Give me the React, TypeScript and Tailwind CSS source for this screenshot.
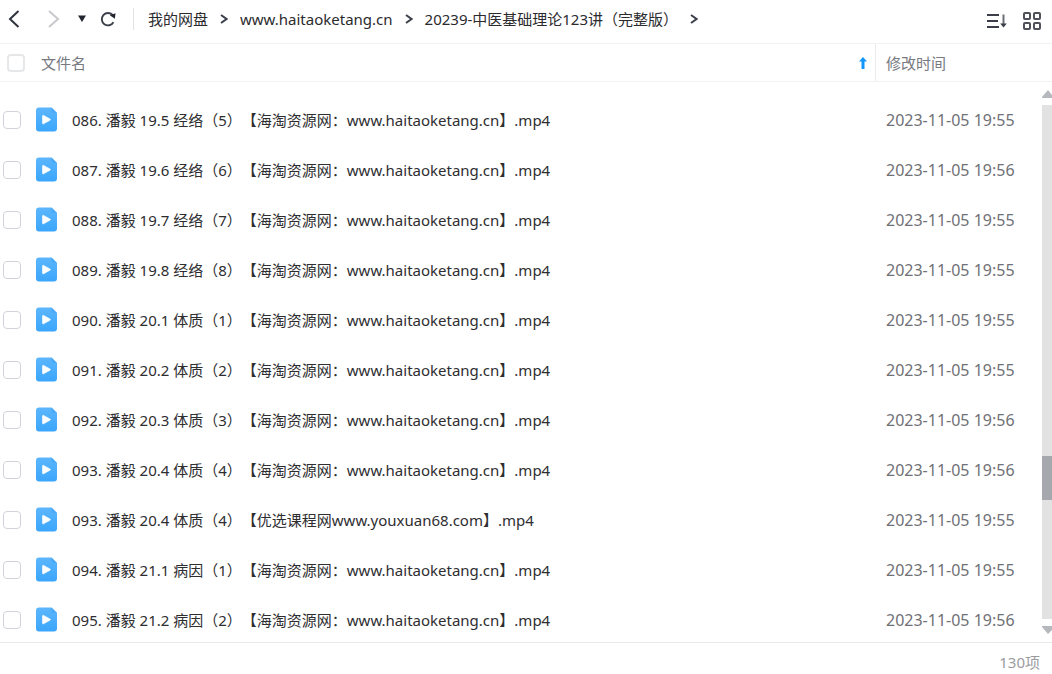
import React, { useState } from 'react';

type FileItem = {
  name: string;
  time: string;
};

const files: FileItem[] = [
  { name: '086. 潘毅 19.5 经络（5）【海淘资源网：www.haitaoketang.cn】.mp4', time: '2023-11-05 19:55' },
  { name: '087. 潘毅 19.6 经络（6）【海淘资源网：www.haitaoketang.cn】.mp4', time: '2023-11-05 19:56' },
  { name: '088. 潘毅 19.7 经络（7）【海淘资源网：www.haitaoketang.cn】.mp4', time: '2023-11-05 19:55' },
  { name: '089. 潘毅 19.8 经络（8）【海淘资源网：www.haitaoketang.cn】.mp4', time: '2023-11-05 19:55' },
  { name: '090. 潘毅 20.1 体质（1）【海淘资源网：www.haitaoketang.cn】.mp4', time: '2023-11-05 19:55' },
  { name: '091. 潘毅 20.2 体质（2）【海淘资源网：www.haitaoketang.cn】.mp4', time: '2023-11-05 19:55' },
  { name: '092. 潘毅 20.3 体质（3）【海淘资源网：www.haitaoketang.cn】.mp4', time: '2023-11-05 19:56' },
  { name: '093. 潘毅 20.4 体质（4）【海淘资源网：www.haitaoketang.cn】.mp4', time: '2023-11-05 19:56' },
  { name: '093. 潘毅 20.4 体质（4）【优选课程网www.youxuan68.com】.mp4', time: '2023-11-05 19:55' },
  { name: '094. 潘毅 21.1 病因（1）【海淘资源网：www.haitaoketang.cn】.mp4', time: '2023-11-05 19:55' },
  { name: '095. 潘毅 21.2 病因（2）【海淘资源网：www.haitaoketang.cn】.mp4', time: '2023-11-05 19:56' },
];

const crumbs = ['我的网盘', 'www.haitaoketang.cn', '20239-中医基础理论123讲（完整版）'];

const CrumbArrow = () => (
  <svg viewBox="0 0 8 10" className="h-[10px] w-2 shrink-0" fill="none" stroke="#3b404a" strokeWidth="2">
    <path d="M1 1l5.5 4L1 9" />
  </svg>
);

const VideoIcon = () => (
  <svg viewBox="0 0 22 25" className="h-[25px] w-[22px] shrink-0">
    <defs>
      <linearGradient id="video" x1="0" y1="0" x2="0" y2="1">
        <stop offset="0" stopColor="#5cb6fd" />
        <stop offset="1" stopColor="#3ba6fc" />
      </linearGradient>
    </defs>
    <path d="M3 .5h12.5L21 6v15.5a3 3 0 0 1-3 3H3a3 3 0 0 1-3-3v-18a3 3 0 0 1 3-3z" fill="url(#video)" />
    <path d="M15.5 .5L21 6h-3a2.500 2.500 0 0 1-2.500-2.500z" fill="#4aaaf8" />
    <path d="M6.500 9v7.200c0 .6.600.9 1.100.6l6.400-3.600c.5-.3.500-.9 0-1.200L7.600 8.400c-.5-.3-1.100 0-1.100.6z" fill="#fff" stroke="#fff" strokeWidth=".6" />
  </svg>
);

const Toolbar = () => (
  <header className="flex h-11 shrink-0 items-center border-b border-[#f2f2f3] pl-2 pr-[11px] pb-1.5">
    {/* Navigation buttons */}
    <button aria-label="后退" className="w-3">
      <svg viewBox="0 0 12 18" className="h-[18px] w-3" fill="none" stroke="#30343e" strokeWidth="2">
        <path d="M10.500 1L2 9l8.500 8" />
      </svg>
    </button>
    <button aria-label="前进" className="ml-7 w-3">
      <svg viewBox="0 0 12 18" className="h-[18px] w-3" fill="none" stroke="#c8c9cc" strokeWidth="2">
        <path d="M1 1l9 8-9 8" />
      </svg>
    </button>
    <button aria-label="历史记录" className="ml-[18px] w-2">
      <svg viewBox="0 0 8 7" className="h-[7px] w-2">
        <path d="M0 .5h8L4 7z" fill="#22252e" />
      </svg>
    </button>
    <button aria-label="刷新" className="ml-3.5 w-4">
      <svg viewBox="0 0 16 16" className="h-4 w-4" fill="none">
        <path d="M13.400 11.200A6.200 6.200 0 1 1 12.600 4" stroke="#3b3f49" strokeWidth="1.900" />
        <path d="M9.800 4.200l5.700-2-.6 5.600z" fill="#22252e" />
      </svg>
    </button>
    <div className="ml-[17px] h-[22px] w-px bg-[#e2e3e5]" />

    {/* Breadcrumb */}
    <nav className="ml-3.5 flex min-w-0 flex-1 items-center gap-3 whitespace-nowrap text-[#2b2b2e]">
      {crumbs.map((crumb) => (
        <React.Fragment key={crumb}>
          <a href="#">{crumb}</a>
          <CrumbArrow />
        </React.Fragment>
      ))}
    </nav>

    <button aria-label="排序" className="mt-1 w-5">
      <svg viewBox="0 0 20 16" className="h-4 w-5" fill="none" stroke="#3b3e48" strokeWidth="2">
        <path d="M0 2h12M0 8h11M0 14h12" />
        <path d="M16.500 1.500v11" stroke="#6b6e75" />
        <path d="M13.200 10.500h6.600l-3.300 4z" fill="#3b3e48" stroke="none" />
      </svg>
    </button>
    <button aria-label="网格视图" className="ml-4 mt-1 w-[18px]">
      <svg viewBox="0 0 18 18" className="h-[18px] w-[18px]" fill="none" stroke="#4e515a" strokeWidth="2">
        <rect x="1" y="1" width="6" height="6" rx="1" />
        <rect x="11" y="1" width="6" height="6" rx="1" />
        <rect x="1" y="11" width="6" height="6" rx="1" />
        <rect x="11" y="11" width="6" height="6" rx="1" />
      </svg>
    </button>
  </header>
);

const ScrollBar = () => (
  <div className="flex w-[10px] shrink-0 flex-col pt-2 pb-2" aria-hidden="true">
    <svg viewBox="0 0 10 8" className="h-2 w-[10px]">
      <path d="M0 7L6 0l4 5v3H0z" fill="#b5b8bc" />
    </svg>
    <div className="mt-[7px] mb-[7px] flex flex-1 flex-col bg-[#e2e2e2]">
      <div className="grow-[351]" />
      <div className="h-11 bg-[#a5a9ae]" />
      <div className="grow-[119]" />
    </div>
    <svg viewBox="0 0 10 8" className="h-2 w-[10px]">
      <path d="M0 0h10v4L6 8 0 1z" fill="#b5b8bc" />
    </svg>
  </div>
);

const checkboxClass =
  'block h-[18px] w-[18px] shrink-0 appearance-none rounded-[4px] bg-white checked:bg-[#37a3fc]';

const App: React.FC = () => {
  const [selected, setSelected] = useState<number[]>([]);

  const toggle = (index: number) => {
    setSelected((prev) => (prev.includes(index) ? prev.filter((i) => i !== index) : [...prev, index]));
  };

  const toggleAll = () => {
    setSelected((prev) => (prev.length === files.length ? [] : files.map((_, i) => i)));
  };

  return (
    <div className="flex h-screen flex-col overflow-hidden bg-white font-['Noto_Sans','Noto_Sans_CJK_SC',sans-serif] text-[15px] leading-5 [text-spacing-trim:space-all]">
      <Toolbar />

      {/* Column titles */}
      <div className="flex h-[38px] shrink-0 items-center border-b border-[#f2f2f3] text-[#77797f]">
        <label className="flex flex-1 items-center gap-4 pl-[7px]">
          <input
            type="checkbox"
            className={`${checkboxClass} border-2 border-[#e6e7e9]`}
            checked={selected.length === files.length}
            onChange={toggleAll}
          />
          文件名
        </label>
        <svg viewBox="0 0 8 12" className="mr-2 h-3 w-2">
          <path d="M4 0l4 4.500H5.500V12h-3V4.500H0z" fill="#1296fb" />
        </svg>
        <div className="flex h-full w-[177px] items-center border-l border-[#ececee] pl-2.5">修改时间</div>
      </div>

      {/* File list */}
      <div className="flex min-h-0 flex-1">
        <div className="min-w-0 flex-1 overflow-hidden pt-[13px]">
          <table className="w-full table-fixed">
            <tbody>
              {files.map((file, index) => (
                <tr key={index} className="h-[50px]">
                  <td className="p-0">
                    <label className="flex items-center whitespace-nowrap pl-[3px] text-[#2e2e31]">
                      <input
                        type="checkbox"
                        className={`${checkboxClass} border border-[#d0d4da]`}
                        checked={selected.includes(index)}
                        onChange={() => toggle(index)}
                      />
                      <span className="ml-[15px] mr-3.5 pb-px">
                        <VideoIcon />
                      </span>
                      {file.name}
                    </label>
                  </td>
                  <td className="w-[156px] p-0 text-base leading-5 text-[#707176]">{file.time}</td>
                </tr>
              ))}
            </tbody>
          </table>
        </div>
        <ScrollBar />
      </div>

      <footer className="flex h-8 shrink-0 items-center justify-end border-t border-[#e9eaec] pr-3 pt-1.5 text-[#9a9b9f]">
        130项
      </footer>
    </div>
  );
};

export default App;
